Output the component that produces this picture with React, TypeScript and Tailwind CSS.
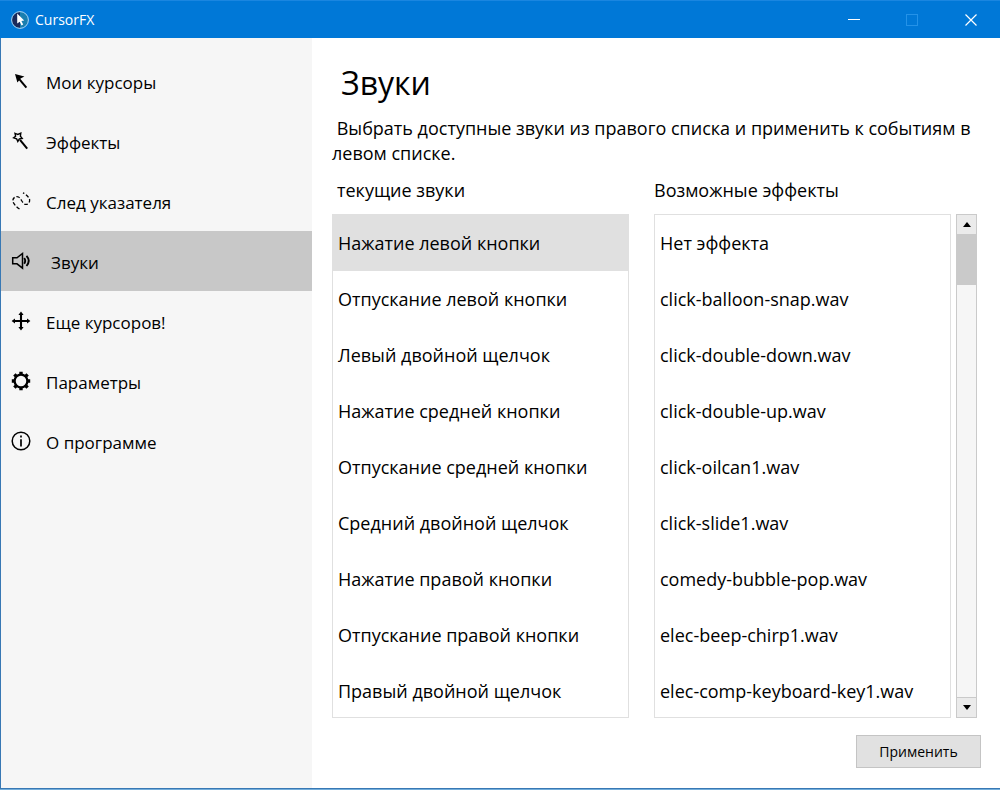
import { useState, type ReactNode } from "react";

const icons: Record<string, ReactNode> = {
  cursor: (
    <>
      <path d="M4 3 L13.4 5.4 L9.6 7.6 L6.4 11.4 Z" fill="currentColor" />
      <path d="M7 6.6 L15.4 16.6" stroke="currentColor" strokeWidth="2" />
    </>
  ),
  effects: (
    <>
      <path
        d="M4 2.4 L6.8 3.4 L9.8 2.2 L9.4 5.2 L11.2 7.4 L8.4 7.8 L6.8 10.4 L5.6 7.8 L2.6 6.8 L4.6 5.2 Z"
        fill="none"
        stroke="currentColor"
        strokeWidth="1.4"
      />
      <path d="M9 8.8 L16.2 17.6" stroke="currentColor" strokeWidth="2" />
    </>
  ),
  trail: (
    <path
      d="M8.5 18 C5 15.5 2 12.5 1.8 9.8 C1.8 7 4.8 4.6 7.5 6 C9.8 7.2 11.5 12.2 14 13.3 C17 14 19 11.5 18.6 8.6 C18 6.5 15.5 3.5 12 1.8"
      fill="none"
      stroke="currentColor"
      strokeWidth="1.3"
      strokeDasharray="3.6 2"
    />
  ),
  sounds: (
    <g fill="none" stroke="currentColor" strokeWidth="1.5">
      <path d="M1.7 6.8 H6 L11.5 2.5 V17.2 L6 12.8 H1.7 Z" />
      <path d="M13.2 7 Q15.2 9.8 13.2 12.7 M15.5 4.8 Q20 9.8 15.5 15" strokeWidth="1.9" />
    </g>
  ),
  more: (
    <>
      <path d="M10 2 V18 M2 10 H18" stroke="currentColor" strokeWidth="2.1" />
      <path
        d="M10 0.6 L12.6 4 H7.4 Z M10 19.4 L12.6 16 H7.4 Z M0.6 10 L4 7.4 V12.6 Z M19.4 10 L16 7.4 V12.6 Z"
        fill="currentColor"
      />
    </>
  ),
  settings: (
    <g fill="none" stroke="currentColor">
      <circle cx="10" cy="10" r="6.4" strokeWidth="2.3" />
      <path
        d="M10 0.8 V4 M10 16 V19.2 M0.8 10 H4 M16 10 H19.2 M3.4 3.4 L5.7 5.7 M14.3 14.3 L16.6 16.6 M16.6 3.4 L14.3 5.7 M5.7 14.3 L3.4 16.6"
        strokeWidth="3.4"
      />
    </g>
  ),
  about: (
    <>
      <circle cx="10" cy="10" r="8.8" fill="none" stroke="currentColor" strokeWidth="1.5" />
      <path d="M10 8.2 V15.4 M10 4.6 V6.6" stroke="currentColor" strokeWidth="1.7" />
    </>
  ),
};

const pages = [
  { id: "cursor", label: "Мои курсоры" },
  { id: "effects", label: "Эффекты" },
  { id: "trail", label: "След указателя" },
  { id: "sounds", label: "Звуки" },
  { id: "more", label: "Еще курсоров!" },
  { id: "settings", label: "Параметры" },
  { id: "about", label: "О программе" },
];

const events = [
  "Нажатие левой кнопки",
  "Отпускание левой кнопки",
  "Левый двойной щелчок",
  "Нажатие средней кнопки",
  "Отпускание средней кнопки",
  "Средний двойной щелчок",
  "Нажатие правой кнопки",
  "Отпускание правой кнопки",
  "Правый двойной щелчок",
];

const effects = [
  "Нет эффекта",
  "click-balloon-snap.wav",
  "click-double-down.wav",
  "click-double-up.wav",
  "click-oilcan1.wav",
  "click-slide1.wav",
  "comedy-bubble-pop.wav",
  "elec-beep-chirp1.wav",
  "elec-comp-keyboard-key1.wav",
];

function TitleBar() {
  return (
    <header className="flex h-[38px] items-center border-t border-[#1a86e0] bg-[#0078d7] pl-[10px] text-white">
      <svg viewBox="0 0 20 20" className="size-5" aria-hidden="true">
        <circle cx="10" cy="10" r="8.3" fill="#1a7fb0" />
        <path d="M10 1.7 A8.3 8.3 0 0 0 10 18.3 Z" fill="#1b2a5c" />
        <circle cx="10" cy="10" r="8.4" fill="none" stroke="#a9d4f3" strokeWidth="1" />
        <path d="M7.2 3.6 L14.2 10.6 L11.4 10.9 L13.2 14.6 L11.5 15.4 L9.8 11.8 L7.2 13.6 Z" fill="#fff" />
      </svg>
      <span className="ml-[5px] text-sm">CursorFX</span>
      <div className="ml-auto flex h-full">
        <button type="button" aria-label="Свернуть" className="flex w-[58px] items-center justify-center">
          <svg viewBox="0 0 12 12" className="size-3">
            <path d="M0 5.5 H12" stroke="#fff" />
          </svg>
        </button>
        <button type="button" aria-label="Развернуть" disabled className="flex w-[58px] items-center justify-center">
          <svg viewBox="0 0 12 12" className="size-3">
            <rect x="0.5" y="0.5" width="11" height="11" fill="none" stroke="#2492e8" />
          </svg>
        </button>
        <button type="button" aria-label="Закрыть" className="flex w-[59px] items-center justify-center">
          <svg viewBox="0 0 12 12" className="size-3">
            <path d="M0.5 0.5 L11.5 11.5 M11.5 0.5 L0.5 11.5" stroke="#fff" strokeWidth="1.2" />
          </svg>
        </button>
      </div>
    </header>
  );
}

function SoundList({ title, items, selected, onSelect }: {
  title: string;
  items: string[];
  selected: string | null;
  onSelect: (item: string) => void;
}) {
  return (
    <ul aria-label={title} className="h-[504px] min-w-0 overflow-hidden border border-[#e0e0e0]">
      {items.map((item) => (
        <li key={item}>
          <button
            type="button"
            aria-pressed={item === selected}
            onClick={() => onSelect(item)}
            className="h-14 w-full truncate px-[5px] text-left aria-pressed:bg-[#e0e0e0]"
          >
            {item}
          </button>
        </li>
      ))}
    </ul>
  );
}

function ScrollBar() {
  return (
    <div className="ml-[5px] flex w-[21px] flex-col border border-[#cacaca] bg-[#f6f6f6]">
      <button type="button" aria-label="Вверх" className="flex h-[19px] items-center justify-center bg-[#ebebeb]">
        <svg viewBox="0 0 8 5" className="h-[5px] w-2">
          <path d="M4 0 L8 5 H0 Z" />
        </svg>
      </button>
      <div className="h-[51px] bg-[#cacaca]" />
      <button
        type="button"
        aria-label="Вниз"
        className="mt-auto flex h-5 items-center justify-center border-t border-[#cacaca] bg-[#ebebeb]"
      >
        <svg viewBox="0 0 8 5" className="h-[5px] w-2">
          <path d="M4 5 L8 0 H0 Z" />
        </svg>
      </button>
    </div>
  );
}

export default function App() {
  const [page, setPage] = useState("sounds");
  const [event, setEvent] = useState<string | null>(events[0]);
  const [effect, setEffect] = useState<string | null>(null);

  return (
    <div className="flex min-h-screen flex-col border-b border-[#74aedb] font-['Open_Sans','Segoe_UI',sans-serif] text-black">
      <TitleBar />
      <div className="flex flex-1 border-b border-l border-[#3878b4] bg-white">
        <nav className="w-[311px] shrink-0 bg-[#f6f6f6] pt-[13px]">
          {pages.map(({ id, label }) => (
            <button
              key={id}
              type="button"
              aria-current={id === page ? "page" : undefined}
              onClick={() => setPage(id)}
              className="group flex h-15 w-full items-center pl-[10px] text-[17px] leading-6 aria-[current=page]:bg-[#c8c8c8]"
            >
              <svg viewBox="0 0 20 20" className="size-5 shrink-0" aria-hidden="true">
                {icons[id]}
              </svg>
              <span className="ml-[15px] pt-1 group-aria-[current=page]:ml-5">{label}</span>
            </button>
          ))}
        </nav>
        <main className="flex min-w-0 flex-1 flex-col pr-[19px] pl-5 text-lg leading-[25px]">
          <h1 className="mt-6 pl-[9px] text-[32px] leading-[42px]">Звуки</h1>
          <p className="mt-3">&nbsp;Выбрать доступные звуки из правого списка и применить к событиям в левом списке.</p>
          <div className="mt-3 mr-[30px] grid grid-cols-2 gap-[25px]">
            <h2 className="pl-[5px]">текущие звуки</h2>
            <h2>Возможные эффекты</h2>
          </div>
          <div className="mt-[11px] mr-1 flex">
            <div className="grid min-w-0 flex-1 grid-cols-2 gap-[25px]">
              <SoundList title="текущие звуки" items={events} selected={event} onSelect={setEvent} />
              <SoundList title="Возможные эффекты" items={effects} selected={effect} onSelect={setEffect} />
            </div>
            <ScrollBar />
          </div>
          <button
            type="button"
            className="mt-[17px] h-[33px] w-[125px] self-end border border-[#c4c4c4] bg-[#e1e1e1] text-sm"
          >
            Применить
          </button>
        </main>
      </div>
    </div>
  );
}
